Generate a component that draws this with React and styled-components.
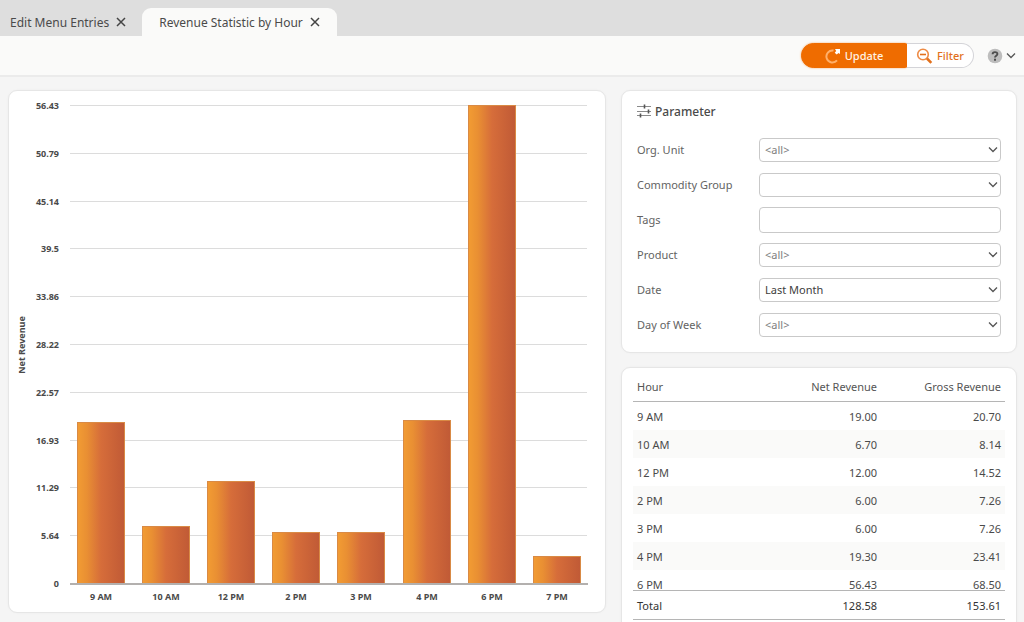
import React, { useState } from 'react';
import styled, { createGlobalStyle } from 'styled-components';

const GlobalStyle = createGlobalStyle`
  * {
    box-sizing: border-box;
  }
  body {
    margin: 0;
    overflow: hidden;
    background: #f5f5f5;
    color: #4a4a4a;
    font-family: 'Noto Sans', 'Open Sans', sans-serif;
    font-size: 11px;
  }
  button, input, select {
    font: inherit;
    color: inherit;
  }
`

const Page = styled.div`
  display: flex;
  flex-direction: column;
  height: 100vh;
`

const TabBar = styled.nav`
  display: flex;
  flex: none;
  align-items: flex-end;
  height: 36px;
  background: #dedede;
`

const Tab = styled.div`
  display: flex;
  align-items: center;
  gap: 7px;
  height: 28px;
  padding: ${(props) => (props.$active ? '0 17px' : '0 16px 0 10px')};
  border-radius: 9px 9px 0 0;
  background: ${(props) => (props.$active ? '#fafaf9' : 'transparent')};
`

const PlainButton = styled.button`
  display: flex;
  align-items: center;
  padding: 0;
  border: 0;
  background: none;
  cursor: pointer;
`

const TabButton = styled(PlainButton)`
  font-size: 12px;
  white-space: nowrap;
`

const Toolbar = styled.header`
  display: flex;
  flex: none;
  align-items: center;
  justify-content: flex-end;
  gap: 13px;
  height: 41px;
  padding: 0 7px;
  border-bottom: 2px solid #ebebeb;
  background: #fafaf9;
`

const ButtonGroup = styled.div`
  display: flex;
`

const ActionButton = styled.button`
  display: flex;
  align-items: center;
  justify-content: center;
  gap: 4px;
  height: 25px;
  cursor: pointer;
  border: 1px solid ${(props) => (props.$primary ? '#ef6c00' : '#d4d4d8')};
  border-left-color: #ef6c00;
  border-radius: ${(props) => (props.$primary ? '13px 0 0 13px' : '0 13px 13px 0')};
  width: ${(props) => (props.$primary ? '105px' : '68px')};
  padding: 0;
  background: ${(props) => (props.$primary ? '#ef6c00' : '#fff')};
  color: ${(props) => (props.$primary ? '#fff3e4' : '#e2701c')};
  font-weight: 500;
  box-shadow: ${(props) => (props.$primary ? '0 0 2px #f5a55f' : 'none')};
`

const Content = styled.main`
  display: flex;
  flex: 1;
  gap: 15px;
  min-height: 0;
  padding: 13px 7px 9px 8px;
`

const Card = styled.section`
  border: 1px solid #e6e6e6;
  border-radius: 9px;
  background: #fff;
  box-shadow: 0 0 2px #ececec;
`

const ChartCard = styled(Card)`
  flex: 1;
  min-width: 0;
`

const Chart = styled.svg`
  display: block;
  width: 100%;
  height: 100%;
  font-size: 9px;
  font-weight: 700;
  fill: #4a4a4a;
`

const SideColumn = styled.div`
  display: flex;
  flex: none;
  flex-direction: column;
  gap: 14px;
  width: 396px;
`

const ParameterCard = styled(Card)`
  flex: none;
  padding: 10px 15px;
`

const CardTitle = styled.h2`
  display: flex;
  align-items: center;
  gap: 4px;
  height: 20px;
  margin: 0 0 11px;
  font-size: 12px;
  font-weight: 500;
`

const FieldRow = styled.div`
  display: grid;
  grid-template-columns: 122px 1fr;
  align-items: center;
  height: 35px;
`

const Label = styled.label`
  color: #636363;
`

const SelectWrapper = styled.div`
  position: relative;
`

const Select = styled.select`
  appearance: none;
  display: block;
  width: 100%;
  height: 24px;
  padding: 0 20px 0 5px;
  border: 1px solid #c9c9c9;
  border-radius: 4px;
  background: #fff;
  color: ${(props) => (props.$muted ? '#808080' : '#404040')};
`

const SelectArrow = styled.svg`
  position: absolute;
  top: 8px;
  right: 3px;
  pointer-events: none;
`

const TextInput = styled.input`
  width: 100%;
  height: 26px;
  padding: 0 5px;
  border: 1px solid #c9c9c9;
  border-radius: 4px;
  background: #fff;
`

const TableCard = styled(Card)`
  flex: none;
  padding: 3px 11px 11px;
`

const Table = styled.table`
  display: block;

  thead, tbody, tfoot {
    display: block;
  }
  tr {
    display: grid;
    grid-template-columns: 1fr 124px 124px;
    align-items: center;
    height: 28px;
  }
  thead tr {
    height: 31px;
    border-bottom: 1px solid #b5b5b5;
    color: #555;
  }
  tbody {
    height: 188px;
    overflow-y: auto;
    scrollbar-width: none;
  }
  tbody tr:nth-child(even) {
    background: #fafaf9;
  }
  tfoot tr {
    height: 30px;
    border-top: 1px solid #b5b5b5;
    border-bottom: 1px solid #b5b5b5;
    color: #333;
  }
`

const Cell = styled.td`
  padding: 0 4px;
  font-weight: 400;
  text-align: ${(props) => (props.$numeric ? 'right' : 'left')};
`

const hours = [
  { hour: '9 AM', net: 19.0, gross: 20.7 },
  { hour: '10 AM', net: 6.7, gross: 8.14 },
  { hour: '12 PM', net: 12.0, gross: 14.52 },
  { hour: '2 PM', net: 6.0, gross: 7.26 },
  { hour: '3 PM', net: 6.0, gross: 7.26 },
  { hour: '4 PM', net: 19.3, gross: 23.41 },
  { hour: '6 PM', net: 56.43, gross: 68.5 },
  { hour: '7 PM', net: 3.15, gross: 3.82 },
];

const pageSize = 7;

const ticks = ['0', '5.64', '11.29', '16.93', '22.57', '28.22', '33.86', '39.5', '45.14', '50.79', '56.43'];

const fields = [
  { id: 'orgUnit', label: 'Org. Unit', options: ['<all>'] },
  { id: 'commodityGroup', label: 'Commodity Group', options: [''] },
  { id: 'tags', label: 'Tags' },
  { id: 'product', label: 'Product', options: ['<all>'] },
  { id: 'date', label: 'Date', options: ['Last Month', 'This Month'] },
  { id: 'dayOfWeek', label: 'Day of Week', options: ['<all>'] },
];

const CloseIcon = () => (
  <svg width="10" height="10" viewBox="0 0 10 10" fill="none" stroke="#444" strokeWidth="1.5">
    <path d="M1 1l8 8M9 1l-8 8" />
  </svg>
);

const UpdateIcon = () => (
  <svg width="17" height="16" viewBox="0 0 17 16" fill="none">
    <path d="M13 12.4A6 6 0 1 1 9.5 2.6" stroke="#ffb06a" strokeWidth="2" />
    <path d="M11 1h5v5l-1.5-1-1.8 1.5-2-1.8 1.5-1.7z" fill="#fff" />
  </svg>
);

const FilterIcon = () => (
  <svg width="17" height="16" viewBox="0 0 17 16" fill="none" stroke="#e2701c">
    <circle cx="7" cy="6.5" r="5.3" stroke="#ee8b45" strokeWidth="1.6" />
    <path d="M4 6.5h6" strokeWidth="1.6" />
    <path d="M11 10.5l4.3 4.3" strokeWidth="2.6" />
  </svg>
);

const HelpIcon = () => (
  <svg width="16" height="16" viewBox="0 0 16 16" fill="none">
    <circle cx="8" cy="8" r="7.3" fill="#bdbdbd" />
    <path d="M5.6 6.2C5.6 3.4 10.4 3.4 10.4 6.1C10.4 7.8 8 7.8 8 9.6" stroke="#4d4d4d" strokeWidth="1.9" />
    <rect x="7" y="10.7" width="2" height="2" fill="#4d4d4d" />
  </svg>
);

const ParameterIcon = () => (
  <svg width="14" height="14" viewBox="0 0 14 14" fill="none" stroke="#8a8a8a">
    <path d="M0 2.5h14M0 7.5h14M0 11.5h14" />
    <path d="M7.5 0.5v4M11.5 5.5v4M3.5 9.5v4" stroke="#555" strokeWidth="1.6" />
  </svg>
);

const Chevron = () => <path d="M1 1.5l4 4 4-4" fill="none" stroke="#555" strokeWidth="1.3" />;

const baseline = 492;
const plotHeight = 478;

const RevenueChart = () => (
  <Chart viewBox="0 0 596 520" preserveAspectRatio="xMinYMin" role="img" aria-label="Net revenue by hour">
    <defs>
      <linearGradient id="barFill">
        <stop offset="0" stopColor="#f29c33" />
        <stop offset="0.2" stopColor="#e98f33" />
        <stop offset="0.5" stopColor="#d66d3a" />
        <stop offset="1" stopColor="#c05a36" />
      </linearGradient>
    </defs>
    <text transform="translate(16 254) rotate(-90)" textAnchor="middle">Net Revenue</text>
    {ticks.map((tick, i) => {
      const y = Math.round(baseline - (i * plotHeight) / 10);
      return (
        <g key={tick}>
          <rect x="61" y={y} width="517" height="1" fill="#dcdcdc" />
          <text x="50" y={y + 4} textAnchor="end">{tick}</text>
        </g>
      );
    })}
    {hours.map(({ hour, net }, i) => {
      const center = 92 + Math.round(i * 65.1);
      const height = Math.round((net / 56.43) * plotHeight);
      return (
        <g key={hour}>
          <rect x={center - 23.5} y={baseline - height + 0.5} width="47" height={height} fill="url(#barFill)" stroke="#d98a45" />
          <text x={center} y="509" textAnchor="middle">{hour}</text>
        </g>
      );
    })}
    <rect x="61" y={baseline} width="518" height="2" fill="#b3b0ae" />
  </Chart>
);

const ParameterField = ({ field }) => {
  const [value, setValue] = useState(field.options ? field.options[0] : '');
  const onChange = (event) => setValue(event.target.value);

  return (
    <FieldRow>
      <Label htmlFor={field.id}>{field.label}</Label>
      {field.options ? (
        <SelectWrapper>
          <Select id={field.id} value={value} onChange={onChange} $muted={value === '<all>'}>
            {field.options.map((option) => <option key={option}>{option}</option>)}
          </Select>
          <SelectArrow width="10" height="8" viewBox="0 0 10 8"><Chevron /></SelectArrow>
        </SelectWrapper>
      ) : (
        <TextInput id={field.id} type="text" value={value} onChange={onChange} />
      )}
    </FieldRow>
  );
};

const App = () => (
  <Page>
    <GlobalStyle />
    <TabBar>
      <Tab>
        <TabButton>Edit Menu Entries</TabButton>
        <PlainButton aria-label="Close Edit Menu Entries"><CloseIcon /></PlainButton>
      </Tab>
      <Tab $active>
        <TabButton>Revenue Statistic by Hour</TabButton>
        <PlainButton aria-label="Close Revenue Statistic by Hour"><CloseIcon /></PlainButton>
      </Tab>
    </TabBar>
    <Toolbar>
      <ButtonGroup>
        <ActionButton $primary><UpdateIcon />Update</ActionButton>
        <ActionButton><FilterIcon />Filter</ActionButton>
      </ButtonGroup>
      <PlainButton aria-label="Help">
        <HelpIcon />
        <svg width="14" height="8" viewBox="-3 0 14 8"><Chevron /></svg>
      </PlainButton>
    </Toolbar>
    <Content>
      <ChartCard><RevenueChart /></ChartCard>
      <SideColumn>
        <ParameterCard>
          <CardTitle><ParameterIcon />Parameter</CardTitle>
          {fields.map((field) => <ParameterField key={field.id} field={field} />)}
        </ParameterCard>
        <TableCard>
          <Table>
            <thead>
              <tr>
                <Cell as="th">Hour</Cell>
                <Cell as="th" $numeric>Net Revenue</Cell>
                <Cell as="th" $numeric>Gross Revenue</Cell>
              </tr>
            </thead>
            <tbody>
              {hours.slice(0, pageSize).map(({ hour, net, gross }) => (
                <tr key={hour}>
                  <Cell>{hour}</Cell>
                  <Cell $numeric>{net.toFixed(2)}</Cell>
                  <Cell $numeric>{gross.toFixed(2)}</Cell>
                </tr>
              ))}
            </tbody>
            <tfoot>
              <tr>
                <Cell>Total</Cell>
                <Cell $numeric>128.58</Cell>
                <Cell $numeric>153.61</Cell>
              </tr>
            </tfoot>
          </Table>
        </TableCard>
      </SideColumn>
    </Content>
  </Page>
);

export default App;
